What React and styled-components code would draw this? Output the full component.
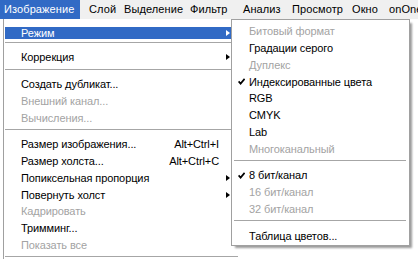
import React from 'react';
import styled, { createGlobalStyle } from 'styled-components';

const GlobalStyle = createGlobalStyle`
  html, body {
    margin: 0;
    padding: 0;
    background: #fff;
  }
  body {
    font-family: 'Liberation Sans', Arial, sans-serif;
    overflow: hidden;
  }
  * { box-sizing: border-box; }
`;

const Screen = styled.div`
  position: relative;
  width: 418px;
  height: 259px;
  overflow: hidden;
  background: #fff;
`;

const MenuBar = styled.div`
  display: flex;
  height: 19px;
  background: #f0f0f0;
  font-size: 11px;
  letter-spacing: 0.1px;
`;

const BarItem = styled.div`
  flex: 0 0 ${p => (p.w ? `${p.w}px` : 'auto')};
  margin-right: ${p => p.gap || 0}px;
  padding-left: 4px;
  line-height: 19px;
  white-space: nowrap;
  overflow: hidden;
  background: ${p => (p.active ? '#316ac5' : 'transparent')};
  color: ${p => (p.active ? '#fff' : '#000')};
`;

const Dropdown = styled.div`
  margin-left: 3px;
  width: 236px;
  height: 240px;
  border-left: 1px solid #a0a0a0;
  padding: 8px 1px 0;
  background: #fff;
  font-size: 11px;
  letter-spacing: -0.1px;
`;

const Row = styled.div`
  display: flex;
  align-items: center;
  height: ${p => p.h || 16.75}px;
  padding-left: ${p => p.pl || 16}px;
  white-space: nowrap;
  background: ${p => (p.active ? '#316ac5' : 'transparent')};
  color: ${p => (p.active ? '#fff' : p.disabled ? '#a3a3a3' : '#000')};
`;

const Label = styled.span`
  flex: 1;
`;

const Shortcut = styled.span`
  margin-right: 3px;
`;

const ArrowSlot = styled.span`
  flex: 0 0 16px;
  display: flex;
  align-items: center;
  padding-left: 4px;
`;

const Arrow = styled.span`
  width: 0;
  height: 0;
  border-top: 3.5px solid transparent;
  border-bottom: 3.5px solid transparent;
  border-left: 4px solid ${p => (p.light ? '#fff' : '#000')};
`;

const Sep = styled.div`
  margin: ${p => p.m || '3px 0 6px'};
  border-top: 1px solid #a6a6a6;
`;

const Submenu = styled.div`
  position: absolute;
  left: 231px;
  top: 19px;
  width: 179px;
  padding: 3px 0 1px;
  border: 1px solid #a0a0a0;
  background: #fff;
  font-size: 11px;
  letter-spacing: -0.1px;
  box-shadow: 3px 3px 2px -1px rgba(0, 0, 0, 0.4);
`;

const CheckSlot = styled.span`
  flex: 0 0 11px;
  display: flex;
  align-items: center;
`;

const Check = () => (
  <svg width="7" height="7" viewBox="0 0 7 7">
    <path d="M0.6 3.4 L2.6 5.6 L6.6 0.8" stroke="#000" strokeWidth="1.7" fill="none" />
  </svg>
);

const bar = [
  { t: 'Изображение', w: 80, gap: 5, active: true },
  { t: 'Слой', w: 35 },
  { t: 'Выделение', w: 66 },
  { t: 'Фильтр', w: 53 },
  { t: 'Анализ', w: 49 },
  { t: 'Просмотр', w: 60 },
  { t: 'Окно', w: 37 },
  { t: 'onOne' },
];

const main = [
  { t: 'Коррекция', sub: true },
  '-',
  { t: 'Создать дубликат...' },
  { t: 'Внешний канал...', off: true },
  { t: 'Вычисления...', off: true },
  '-',
  { t: 'Размер изображения...', key: 'Alt+Ctrl+I' },
  { t: 'Размер холста...', key: 'Alt+Ctrl+C' },
  { t: 'Попиксельная пропорция', sub: true },
  { t: 'Повернуть холст', sub: true },
  { t: 'Кадрировать', off: true },
  { t: 'Тримминг...' },
  { t: 'Показать все', off: true },
  '-',
];

const modes = [
  { t: 'Битовый формат', off: true },
  { t: 'Градации серого' },
  { t: 'Дуплекс', off: true },
  { t: 'Индексированные цвета', on: true },
  { t: 'RGB' },
  { t: 'CMYK' },
  { t: 'Lab' },
  { t: 'Многоканальный', off: true },
  '-',
  { t: '8 бит/канал', on: true },
  { t: '16 бит/канал', off: true },
  { t: '32 бит/канал', off: true },
  '-',
  { t: 'Таблица цветов...' },
];

export default function App() {
  return (
    <Screen>
      <GlobalStyle />
      <MenuBar>
        {bar.map(b => (
          <BarItem key={b.t} w={b.w} gap={b.gap} active={b.active}>
            {b.t}
          </BarItem>
        ))}
      </MenuBar>

      <Dropdown>
        <Row h={12} active>
          <Label>Режим</Label>
          <ArrowSlot>
            <Arrow light />
          </ArrowSlot>
        </Row>
        <Sep />
        {main.map((m, i) =>
          m === '-' ? (
            <Sep key={i} />
          ) : (
            <Row key={i} disabled={m.off}>
              <Label>{m.t}</Label>
              {m.key && <Shortcut>{m.key}</Shortcut>}
              <ArrowSlot>{m.sub && <Arrow />}</ArrowSlot>
            </Row>
          )
        )}
      </Dropdown>

      <Submenu>
        {modes.map((m, i) =>
          m === '-' ? (
            <Sep key={i} m="3px 3px 6px 2px" />
          ) : (
            <Row key={i} pl={6} disabled={m.off}>
              <CheckSlot>{m.on && <Check />}</CheckSlot>
              <Label>{m.t}</Label>
            </Row>
          )
        )}
      </Submenu>
    </Screen>
  );
}
